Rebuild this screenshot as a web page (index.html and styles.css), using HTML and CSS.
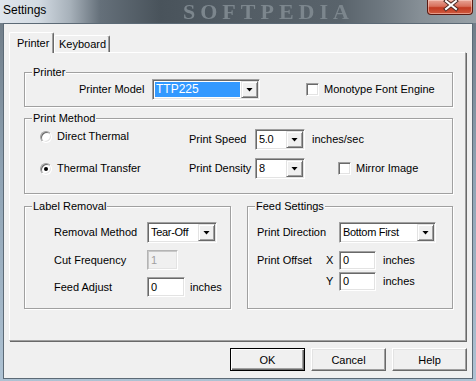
FILE: index.html
```html
<!DOCTYPE html>
<html lang="en">
<head>
    <meta charset="UTF-8">
    <meta name="viewport" content="width=device-width, initial-scale=1.0">
    <title>Settings</title>
    <link rel="stylesheet" href="styles.css">
</head>
<body>
    <div class="window">
        <div class="titlebar">
            <span class="title">Settings</span>
            <span class="watermark">SOFTPEDIA</span>
            <button class="close" type="button">
                <svg width="46" height="15" viewBox="0 0 46 15">
                    <path d="M19 2 L29 10 M29 2 L19 10" stroke="#4a2a24" stroke-width="4" stroke-linecap="square"/>
                    <path d="M19 2 L29 10 M29 2 L19 10" stroke="#fff" stroke-width="2" stroke-linecap="square"/>
                </svg>
            </button>
        </div>

        <div class="client">
            <div class="tabs">
                <div class="tab active">Printer</div>
                <div class="tab">Keyboard</div>
            </div>

            <div class="panel">
                <!-- Printer -->
                <div class="group printer-group">
                    <span class="legend">Printer</span>
                    <span class="model-label">Printer Model</span>
                    <div class="combo model-combo">
                        <span class="combo-text selected">TTP225</span>
                        <span class="arrow"></span>
                    </div>
                    <label class="check monotype"><span class="box"></span>Monotype Font Engine</label>
                </div>

                <!-- Print Method -->
                <div class="group method-group">
                    <span class="legend">Print Method</span>
                    <label class="radio first"><span class="dot"></span>Direct Thermal</label>
                    <span>Print Speed</span>
                    <div class="combo">
                        <span class="combo-text">5.0</span>
                        <span class="arrow"></span>
                    </div>
                    <span class="unit">inches/sec</span>

                    <label class="radio"><span class="dot on"></span>Thermal Transfer</label>
                    <span>Print Density</span>
                    <div class="combo">
                        <span class="combo-text">8</span>
                        <span class="arrow"></span>
                    </div>
                    <label class="check mirror"><span class="box"></span>Mirror Image</label>
                </div>

                <div class="group-row">
                    <!-- Label Removal -->
                    <div class="group removal-group">
                        <span class="legend">Label Removal</span>
                        <span>Removal Method</span>
                        <div class="combo tear-combo">
                            <span class="combo-text">Tear-Off</span>
                            <span class="arrow"></span>
                        </div>

                        <span>Cut Frequency</span>
                        <div class="input disabled cut-input">1</div>

                        <span>Feed Adjust</span>
                        <div class="with-unit">
                            <div class="input feed-input">0</div>
                            <span class="unit">inches</span>
                        </div>
                    </div>

                    <!-- Feed Settings -->
                    <div class="group feed-group">
                        <span class="legend">Feed Settings</span>
                        <div class="direction-row">
                            <span class="direction-label">Print Direction</span>
                            <div class="combo direction-combo">
                                <span class="combo-text">Bottom First</span>
                                <span class="arrow"></span>
                            </div>
                        </div>
                        <div class="offset-grid">
                            <span>Print Offset</span>
                            <span>X</span>
                            <div class="input offset-input">0</div>
                            <span class="unit">inches</span>

                            <span></span>
                            <span>Y</span>
                            <div class="input offset-input">0</div>
                            <span class="unit">inches</span>
                        </div>
                    </div>
                </div>
            </div>

            <div class="buttons">
                <button class="btn default" type="button">OK</button>
                <button class="btn" type="button">Cancel</button>
                <button class="btn" type="button">Help</button>
            </div>
        </div>
    </div>
</body>
</html>
```

FILE: styles.css
```css
body {
    margin: 0;
    font-family: 'Liberation Sans', Arial, sans-serif;
    font-size: 11px;
    line-height: 13px;
    color: #000;
}

.window {
    width: 476px;
    height: 381px;
    overflow: hidden;
    background: linear-gradient(180deg, #6c7882 0, #8fa3b4 45%, #aec2d3 100%);
}

/* title bar */
.titlebar {
    position: relative;
    height: 23px;
    display: flex;
    padding: 0 3px;
    background: linear-gradient(90deg, #dfe5ec 0, #d3dbe3 38px, #a7b1ba 70px, #65707a 100px,
        #49535b 160px, #535d65 250px, #59636b 340px, #6d777f 380px, #868f96 420px, #98a1a7 476px);
}

.title {
    font-size: 12px;
    line-height: 20px;
    color: #000;
}

.watermark {
    position: absolute;
    left: 183px;
    top: 1px;
    font-family: 'Liberation Serif', serif;
    font-weight: bold;
    font-size: 22px;
    line-height: 22px;
    letter-spacing: 5px;
    color: #7c868d;
    filter: blur(0.7px);
}

.close {
    position: relative;
    margin-left: auto;
    width: 46px;
    height: 15px;
    padding: 0;
    border: 1px solid #5a1a12;
    border-top: none;
    border-radius: 0 0 4px 4px;
    background: linear-gradient(180deg, #e8a496 0, #d8705c 45%, #c23a22 55%, #cf5a3e 100%);
    box-shadow: inset 0 0 0 1px rgba(255, 220, 210, 0.5);
}

.close svg {
    position: absolute;
    left: -1px;
    top: -1px;
}

/* client area */
.client {
    margin: 0 3px;
    height: 356px;
    box-sizing: border-box;
    border: 1px solid #5c6a76;
    background-color: #f0f0f0;
    padding: 8px 5px 0;
}

.tabs {
    display: flex;
    align-items: flex-end;
    height: 20px;
    position: relative;
    z-index: 1;
}

.tab {
    box-sizing: border-box;
    height: 17px;
    width: 56px;
    padding-left: 4px;
    display: flex;
    align-items: center;
    background-color: #f0f0f0;
    border: 1px solid;
    border-color: #fff #696969 transparent #fff;
    border-bottom: none;
    border-radius: 2px 2px 0 0;
    box-shadow: inset -1px 0 0 #a0a0a0;
}

.tab.active {
    height: 21px;
    width: 45px;
    padding-left: 7px;
    margin-bottom: -1px;
}

.panel {
    box-sizing: border-box;
    width: 457px;
    height: 289px;
    padding: 19px 0 0 14px;
    border: 1px solid;
    border-color: #fff #a0a0a0 #a0a0a0 #fff;
    box-shadow: 1px 1px 0 #696969;
}

/* group boxes */
.group {
    position: relative;
    box-sizing: border-box;
    width: 429px;
    border: 1px solid #a0a0a0;
    box-shadow: 1px 1px 0 #fff, inset 1px 1px 0 #fff;
}

.legend {
    position: absolute;
    top: -7px;
    left: 7px;
    padding: 0 1px;
    background-color: #f0f0f0;
}

.printer-group {
    height: 35px;
    display: flex;
    align-items: center;
    padding-left: 54px;
}

.model-label {
    width: 73px;
}

.model-combo {
    width: 108px;
}

.monotype {
    margin-left: 46px;
}

.method-group {
    height: 76px;
    margin-top: 11px;
    padding: 10px 0 0 15px;
    display: grid;
    grid-template-columns: 149px 66px 50px auto;
    grid-template-rows: 21px 21px;
    row-gap: 8px;
    align-items: center;
}

.method-group .unit {
    margin-left: 7px;
}

.mirror {
    margin-left: 33px;
}

.group-row {
    display: flex;
    gap: 16px;
    margin-top: 12px;
}

.removal-group,
.feed-group {
    height: 103px;
}

.removal-group {
    width: 207px;
    padding: 15px 0 0 29px;
    display: grid;
    grid-template-columns: 93px auto;
    grid-template-rows: 21px 20px 20px;
    row-gap: 7px;
    align-items: center;
    align-content: start;
}

.tear-combo {
    width: 70px;
}

.cut-input {
    width: 31px;
}

.feed-input {
    width: 38px;
}

.with-unit {
    display: flex;
    align-items: center;
}

.with-unit .unit {
    margin-left: 5px;
}

.feed-group {
    width: 206px;
    padding: 15px 0 0 9px;
}

.direction-row {
    display: flex;
    align-items: center;
}

.direction-label {
    width: 82px;
}

.direction-combo {
    width: 97px;
}

.offset-grid {
    display: grid;
    grid-template-columns: 69px 13px 37px auto;
    grid-template-rows: 19px 19px;
    row-gap: 2px;
    margin-top: 8px;
    align-items: center;
}

.offset-grid .unit {
    margin-left: 7px;
}

/* controls */
.combo {
    display: flex;
    box-sizing: border-box;
    height: 21px;
    padding: 1px;
    background-color: #fff;
    border: 1px solid;
    border-color: #a0a0a0 #fff #fff #a0a0a0;
    box-shadow: inset 1px 1px 0 #696969, inset -1px -1px 0 #e3e3e3;
}

.combo-text {
    flex: 1;
    padding-left: 2px;
    display: flex;
    align-items: center;
    font-size: 11px;
    letter-spacing: -0.3px;
}

.combo-text.selected {
    margin: 1px;
    padding-left: 1px;
    background-color: #3399ff;
    color: #fff;
    font-size: 12px;
    letter-spacing: 0;
}

.arrow {
    box-sizing: border-box;
    width: 17px;
    display: flex;
    align-items: center;
    justify-content: center;
    background-color: #f0f0f0;
    border: 1px solid;
    border-color: #e3e3e3 #696969 #696969 #e3e3e3;
    box-shadow: inset 1px 1px 0 #fff, inset -1px -1px 0 #a0a0a0;
}

.arrow::after {
    content: "";
    width: 7px;
    height: 4px;
    background-color: #000;
    clip-path: polygon(0 0, 100% 0, 50% 100%);
}

.input {
    box-sizing: border-box;
    height: 20px;
    padding-left: 3px;
    display: flex;
    align-items: center;
    font-size: 11px;
    background-color: #fff;
    border: 1px solid;
    border-color: #a0a0a0 #fff #fff #a0a0a0;
    box-shadow: inset 1px 1px 0 #696969, inset -1px -1px 0 #e3e3e3;
}

.offset-input {
    height: 19px;
}

.input.disabled {
    background-color: #f0f0f0;
    color: #a0a0a0;
    border-color: #b4b4b4 #fff #fff #b4b4b4;
    box-shadow: inset 1px 1px 0 #c8c8c8, inset -1px -1px 0 #e3e3e3;
}

.check,
.radio {
    display: flex;
    align-items: center;
    gap: 5px;
}

.radio.first {
    align-self: start;
    margin-top: 1px;
}

.box,
.dot {
    box-sizing: border-box;
    width: 13px;
    height: 13px;
    background-color: #fff;
    border: 1px solid;
    border-color: #a0a0a0 #fff #fff #a0a0a0;
    box-shadow: inset 1px 1px 0 #696969, inset -1px -1px 0 #e3e3e3;
}

.dot {
    width: 12px;
    height: 12px;
    border-radius: 50%;
    display: flex;
    align-items: center;
    justify-content: center;
}

.dot.on::after {
    content: "";
    width: 4px;
    height: 4px;
    border-radius: 50%;
    background-color: #000;
}

/* dialog buttons */
.buttons {
    display: flex;
    justify-content: flex-end;
    gap: 6px;
    margin-top: 7px;
}

.btn {
    box-sizing: border-box;
    width: 75px;
    height: 23px;
    padding: 0;
    font-family: 'Liberation Sans', Arial, sans-serif;
    font-size: 11px;
    color: #000;
    background-color: #f0f0f0;
    border: 1px solid;
    border-color: #fff #696969 #696969 #fff;
    box-shadow: inset -1px -1px 0 #a0a0a0, inset 1px 1px 0 #e3e3e3;
}

.btn.default {
    border-color: #000;
    box-shadow: inset 1px 1px 0 #fff, inset -1px -1px 0 #696969, inset -2px -2px 0 #a0a0a0;
}
```
